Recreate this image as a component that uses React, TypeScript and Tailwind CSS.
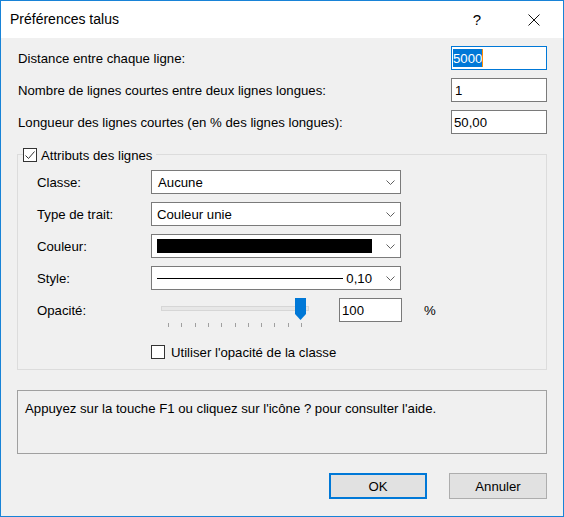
import React from 'react'

function Chevron() {
  return (
    <svg width="9" height="5" viewBox="0 0 9 5" className="block">
      <path d="M0.5 0.5 L4.5 4.5 L8.5 0.5" fill="none" stroke="#606060" strokeWidth="1" />
    </svg>
  )
}

function Select({ children }: { children: React.ReactNode }) {
  return (
    <div className="w-[250px] h-6 bg-white border border-[#7a7a7a] flex items-center">
      <div className="flex-1 min-w-0 pl-[5px] flex items-center">{children}</div>
      <div className="w-[28px] flex justify-end pr-[5px]">
        <Chevron />
      </div>
    </div>
  )
}

function CheckBox({ checked }: { checked?: boolean }) {
  return (
    <div className="w-[14px] h-[14px] bg-white border border-[#333333] flex items-center justify-center shrink-0">
      {checked && (
        <svg width="12" height="12" viewBox="0 0 12 12">
          <path d="M1.5 6.5 L4.5 9.5 L10.5 2.5" fill="none" stroke="#333333" strokeWidth="1" />
        </svg>
      )}
    </div>
  )
}

function Slider() {
  const ticks = [0, 1, 2, 3, 4, 5, 6, 7, 8, 9, 10]
  return (
    <svg width="188" height="32" viewBox="0 0 188 32" className="block self-start">
      <rect x="10.5" y="8.5" width="147" height="4" fill="#e7e7e7" stroke="#d6d6d6" />
      {ticks.map((i) => (
        <rect key={i} x={Math.round(17 + i * 13.3)} y="25" width="1" height="4" fill="#a0a0a0" />
      ))}
      <path d="M144 0 H155 V16 L149.5 22 L144 16 Z" fill="#0078d7" />
    </svg>
  )
}

function Row({ label, children }: { label: string; children: React.ReactNode }) {
  return (
    <div className="h-6 flex items-center">
      <div className="w-[114px]">{label}</div>
      {children}
    </div>
  )
}

export default function App() {
  return (
    <div className="w-[564px] h-[517px] flex flex-col border border-[#1883d7] bg-[#f0f0f0] text-[13.2px] text-black font-['Liberation_Sans',Arial,sans-serif] leading-[15px]">
      <div className="h-[37px] bg-white flex items-center pl-[9px] pr-[6px] text-[14px]">
        <span className="flex-1">Préférences talus</span>
        <span className="w-[46px] text-center text-[15px]">?</span>
        <span className="w-[46px] ml-[11px] flex justify-center">
          <svg width="12" height="12" viewBox="0 0 12 12">
            <path d="M0.5 0.5 L11.5 11.5 M11.5 0.5 L0.5 11.5" stroke="#111" strokeWidth="1" />
          </svg>
        </span>
      </div>

      <div className="flex-1 flex flex-col px-4 pt-2">
        <div className="flex flex-col gap-2">
          <div className="h-6 flex items-center justify-between">
            <span className="pl-px">Distance entre chaque ligne:</span>
            <div className="w-24 h-6 bg-white border border-[#0078d7] flex items-center pl-px">
              <span className="bg-[#0078d7] text-white h-[18px] flex items-center">5000</span>
              <span className="w-px h-[18px] bg-[#ff8c00]" />
            </div>
          </div>
          <div className="h-6 flex items-center justify-between">
            <span className="pl-px">Nombre de lignes courtes entre deux lignes longues:</span>
            <div className="w-24 h-6 bg-white border border-[#7a7a7a] flex items-center pl-[3px]">1</div>
          </div>
          <div className="h-6 flex items-center justify-between">
            <span className="pl-px">Longueur des lignes courtes (en % des lignes longues):</span>
            <div className="w-24 h-6 bg-white border border-[#7a7a7a] flex items-center pl-[2px]">50,00</div>
          </div>
        </div>

        <div className="mt-5 border border-[#dcdcdc] pl-[19px] pb-[9px]">
          <div className="-mt-[7px] -ml-[14px] self-start flex items-center h-[14px]">
            <CheckBox checked />
            <span className="bg-[#f0f0f0] pl-1 pr-[4px]">Attributs des lignes</span>
          </div>
          <div className="mt-2 flex flex-col gap-2">
            <Row label="Classe:">
              <Select>
                <span className="pl-px">Aucune</span>
              </Select>
            </Row>
            <Row label="Type de trait:">
              <Select>
                <span>Couleur unie</span>
              </Select>
            </Row>
            <Row label="Couleur:">
              <Select>
                <div className="flex-1 h-[14px] bg-black" />
              </Select>
            </Row>
            <Row label="Style:">
              <Select>
                <div className="flex-1 h-px bg-black" />
                <span className="pl-[3px]">0,10</span>
              </Select>
            </Row>
            <Row label="Opacité:">
              <Slider />
              <div className="w-[63px] h-6 bg-white border border-[#7a7a7a] flex items-center pl-[2px]">100</div>
              <span className="ml-[22px]">%</span>
            </Row>
          </div>
          <div className="mt-[22px] ml-[114px] h-4 flex items-center">
            <CheckBox />
            <span className="pl-[6px]">Utiliser l'opacité de la classe</span>
          </div>
        </div>

        <div className="mt-5 h-[64px] border border-[#a0a0a0] pt-[10px] pl-[7px]">
          Appuyez sur la touche F1 ou cliquez sur l'icône ? pour consulter l'aide.
        </div>

        <div className="mt-[19px] flex justify-end gap-[22px]">
          <button className="w-[98px] h-[26px] bg-[#e1e1e1] border-2 border-[#0078d7]">OK</button>
          <button className="w-[98px] h-[26px] bg-[#e1e1e1] border border-[#adadad]">Annuler</button>
        </div>
      </div>
    </div>
  )
}
